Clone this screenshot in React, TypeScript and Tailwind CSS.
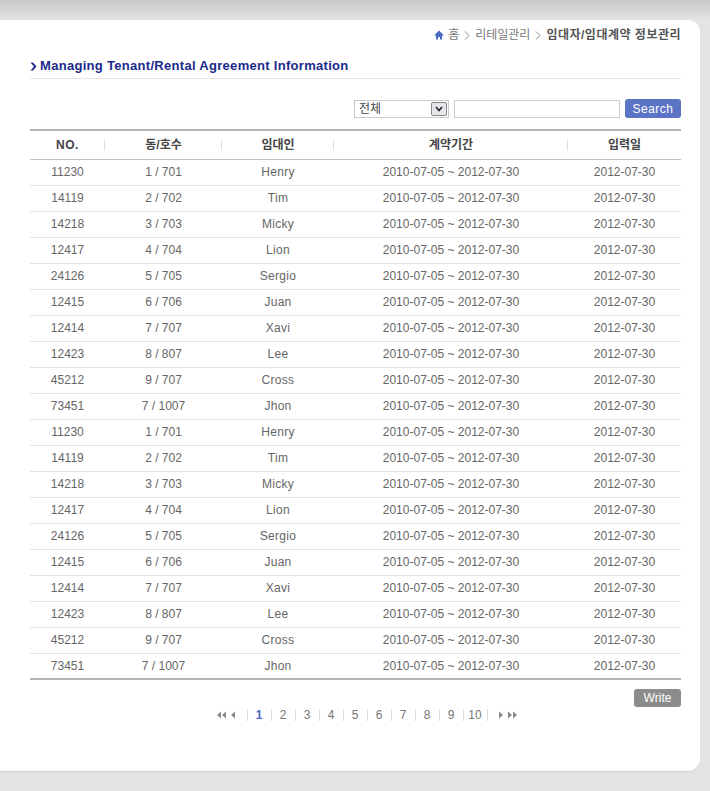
import React from 'react';

type Row = {
  no: string;
  unit: string;
  name: string;
};

const base: Row[] = [
  { no: '11230', unit: '1 / 701', name: 'Henry' },
  { no: '14119', unit: '2 / 702', name: 'Tim' },
  { no: '14218', unit: '3 / 703', name: 'Micky' },
  { no: '12417', unit: '4 / 704', name: 'Lion' },
  { no: '24126', unit: '5 / 705', name: 'Sergio' },
  { no: '12415', unit: '6 / 706', name: 'Juan' },
  { no: '12414', unit: '7 / 707', name: 'Xavi' },
  { no: '12423', unit: '8 / 807', name: 'Lee' },
  { no: '45212', unit: '9 / 707', name: 'Cross' },
  { no: '73451', unit: '7 / 1007', name: 'Jhon' },
];

const rows = [...base, ...base];

const font = { fontFamily: '"Liberation Sans", "Noto Sans CJK KR", sans-serif' };

function HeadSep() {
  return <span className="absolute right-0 top-1/2 -translate-y-1/2 h-[11px] w-px bg-[#dddddd]" />;
}

function Chevron() {
  return (
    <svg width="6" height="9" viewBox="0 0 6 9" className="mx-[5px]">
      <path d="M1 0.5 L5 4.5 L1 8.5" fill="none" stroke="#888" strokeWidth="1" />
    </svg>
  );
}

export default function App() {
  return (
    <div
      className="min-h-[791px] w-[710px] bg-[linear-gradient(to_bottom,#c8c8c8,#e4e4e4_20px)] pt-[20px] overflow-hidden"
      style={font}
    >
      <div className="w-[700px] h-[751px] bg-white rounded-r-[12px] shadow-[0_1px_1px_rgba(0,0,0,0.08)] pl-[30px] pr-[19px] pt-[7px]">
        {/* breadcrumb */}
        <div className="flex items-center justify-end h-[16px] text-[12px] text-[#777]">
          <svg width="10" height="10" viewBox="0 0 10 10" className="mr-[4px]">
            <path d="M5 0.5 L10 5.5 L8 5.5 L8 9.5 L6 9.5 L6 7 L4 7 L4 9.5 L2 9.5 L2 5.5 L0 5.5 Z" fill="#4a68c0" />
          </svg>
          <span>홈</span>
          <Chevron />
          <span>리테일관리</span>
          <Chevron />
          <span className="font-bold text-[#555] tracking-[0.5px]">임대자/임대계약 정보관리</span>
        </div>

        {/* title */}
        <div className="flex items-center h-[22px] mt-[12px] border-b border-[#e8e8e8] pb-[1px] box-content">
          <svg width="7" height="9" viewBox="0 0 7 9" className="mr-[3px]">
            <path d="M0.5 0.5 L3 0.5 L6.5 4.5 L3 8.5 L0.5 8.5 L4 4.5 Z" fill="#1a2a8a" />
          </svg>
          <h1 className="text-[13px] font-bold text-[#1a2a8a] tracking-[0.3px]">
            Managing Tenant/Rental Agreement Information
          </h1>
        </div>

        {/* search */}
        <div className="flex items-center justify-end gap-[5px] mt-[20px] h-[19px]">
          <div className="flex items-center justify-between w-[95px] h-[18px] border border-[#cccccc] pl-[4px] pr-px text-[12px] text-[#444]">
            <span>전체</span>
            <span className="flex items-center justify-center w-[16px] h-[14px] bg-[#e4e6ec] border border-[#8a8a8a] rounded-[2px]">
              <svg width="8" height="6" viewBox="0 0 8 6">
                <path d="M1 1 L4 4.5 L7 1" fill="none" stroke="#222" strokeWidth="1.6" />
              </svg>
            </span>
          </div>
          <div className="w-[166px] h-[18px] border border-[#cccccc]" />
          <button className="w-[56px] h-[19px] rounded-[3px] bg-[#5b74c6] text-white text-[12px] tracking-[0.5px] leading-none">
            Search
          </button>
        </div>

        {/* table */}
        <table className="w-full mt-[11px] border-collapse text-[12px]">
          <thead>
            <tr className="h-[29px] border-t-2 border-b border-t-[#b4b4b4] border-b-[#c4c4c4] text-[#444] font-bold">
              <th className="relative w-[75px] font-bold tracking-[0.5px]">NO.<HeadSep /></th>
              <th className="relative w-[117px] font-bold">동/호수<HeadSep /></th>
              <th className="relative w-[112px] font-bold">임대인<HeadSep /></th>
              <th className="relative w-[234px] font-bold">계약기간<HeadSep /></th>
              <th className="font-bold">입력일</th>
            </tr>
          </thead>
          <tbody className="text-[#666]">
            {rows.map((r, i) => (
              <tr
                key={i}
                className={
                  i === rows.length - 1
                    ? 'h-[26px] border-b-2 border-[#b4b4b4]'
                    : 'h-[26px] border-b border-[#e4e4e4]'
                }
              >
                <td className="text-center">{r.no}</td>
                <td className="text-center">{r.unit}</td>
                <td className="text-center tracking-[0.3px]">{r.name}</td>
                <td className="text-center">2010-07-05 ~ 2012-07-30</td>
                <td className="text-center">2012-07-30</td>
              </tr>
            ))}
          </tbody>
        </table>

        {/* write */}
        <div className="flex justify-end mt-[9px]">
          <button className="w-[47px] h-[18px] rounded-[3px] bg-[#8c8c8c] text-white text-[12px] leading-none">
            Write
          </button>
        </div>

        {/* pagination */}
        <div className="flex items-center justify-center h-[16px] text-[12px] text-[#777] pl-[22px]">
          <svg width="19" height="8" viewBox="0 0 19 8" className="mr-[11px]">
            <path d="M0 4 L4 0.5 L4 7.5 Z M5 4 L9 0.5 L9 7.5 Z M14 4 L18 0.5 L18 7.5 Z" fill="#888" />
          </svg>
          {['1', '2', '3', '4', '5', '6', '7', '8', '9', '10'].map((n) => (
            <span key={n} className="flex items-center">
              <span className="w-px h-[12px] bg-[#dddddd]" />
              <span
                className={
                  n === '1'
                    ? 'w-[23px] text-center font-bold text-[#4a68c0]'
                    : 'w-[23px] text-center text-[#777]'
                }
              >
                {n}
              </span>
            </span>
          ))}
          <span className="w-px h-[12px] bg-[#dddddd]" />
          <svg width="19" height="8" viewBox="0 0 19 8" className="ml-[10px]">
            <path d="M1 0.5 L5 4 L1 7.5 Z M10 0.5 L14 4 L10 7.5 Z M15 0.5 L19 4 L15 7.5 Z" fill="#888" />
          </svg>
        </div>
      </div>
    </div>
  );
}
